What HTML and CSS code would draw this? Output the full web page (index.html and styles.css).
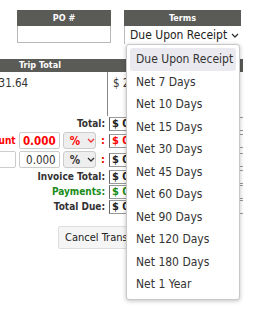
FILE: index.html
```html
<!DOCTYPE html>
<html lang="en">
<head>
    <meta charset="UTF-8">
    <meta name="viewport" content="width=device-width, initial-scale=1.0">
    <title>Trip Invoice</title>
    <link rel="stylesheet" href="styles.css">
</head>
<body>
    <div class="page">
        <div class="top-row">
            <div class="field po">
                <div class="field-head">PO #</div>
                <div class="field-box"></div>
            </div>
            <div class="field terms">
                <div class="field-head">Terms</div>
                <div class="select-box">
                    <span>Due Upon Receipt</span>
                    <svg class="chev" width="8" height="5" viewBox="0 0 8 5"><path d="M1 1l3 3 3-3" fill="none" stroke="#333" stroke-width="1.3"/></svg>
                </div>
                <ul class="menu">
                    <li class="active">Due Upon Receipt</li>
                    <li>Net 7 Days</li>
                    <li>Net 10 Days</li>
                    <li>Net 15 Days</li>
                    <li>Net 30 Days</li>
                    <li>Net 45 Days</li>
                    <li>Net 60 Days</li>
                    <li>Net 90 Days</li>
                    <li>Net 120 Days</li>
                    <li>Net 180 Days</li>
                    <li>Net 1 Year</li>
                </ul>
            </div>
        </div>

        <div class="trip">
            <div class="trip-head">
                <div class="col-a">Trip Total</div>
                <div class="col-b"></div>
            </div>
            <div class="trip-row">
                <div class="col-a">$31.64</div>
                <div class="col-b">$ 231.64</div>
            </div>
        </div>

        <div class="totals">
            <div class="t-row">
                <div class="t-label">Total:</div>
                <div class="t-value">$ 0.00</div>
            </div>
            <div class="t-row red">
                <div class="t-label">
                    <span>Discount</span>
                    <input class="num red-num" value="0.000">
                    <div class="pct red-pct">% <svg width="8" height="5" viewBox="0 0 8 5"><path d="M1 1l3 3 3-3" fill="none" stroke="#e33" stroke-width="1.3"/></svg></div>
                    <span class="colon">:</span>
                </div>
                <div class="t-value">$ 0.00</div>
            </div>
            <div class="t-row">
                <div class="t-label">
                    <input class="num wide" value="">
                    <input class="num" value="0.000">
                    <div class="pct">% <svg width="8" height="5" viewBox="0 0 8 5"><path d="M1 1l3 3 3-3" fill="none" stroke="#333" stroke-width="1.3"/></svg></div>
                    <span class="colon">:</span>
                </div>
                <div class="t-value">$ 0.00</div>
            </div>
            <div class="t-row">
                <div class="t-label">Invoice Total:</div>
                <div class="t-value">$ 0.00</div>
            </div>
            <div class="t-row green">
                <div class="t-label">Payments:</div>
                <div class="t-value">$ 0.00</div>
            </div>
            <div class="t-row">
                <div class="t-label">Total Due:</div>
                <div class="t-value">$ 0.00</div>
            </div>
        </div>

        <div class="actions">
            <button class="btn">Cancel Transaction</button>
        </div>
    </div>
</body>
</html>
```

FILE: styles.css
```css
html, body {
    height: 320px;
}

body {
    margin: 0;
    overflow: hidden;
    background: #fff;
    font-family: 'DejaVu Sans Condensed', 'Liberation Sans', sans-serif;
    color: #333;
}

.page {
    margin-left: -12px;
    width: 255px;
    padding-top: 10px;
}

.top-row {
    display: flex;
    padding-left: 29px;
    gap: 13px;
}

.field {
    position: relative;
}

.field.po {
    width: 94px;
}

.field.terms {
    width: 117px;
}

.field-head {
    background: #5a5a57;
    color: #fff;
    font-size: 9px;
    font-weight: bold;
    text-align: center;
    height: 16px;
    line-height: 16px;
}

.field-box {
    height: 16px;
    border: 1px solid #b8b8b8;
    border-top: none;
}

.select-box {
    display: flex;
    align-items: center;
    gap: 4px;
    height: 18px;
    padding-left: 5px;
    font-size: 12px;
    color: #222;
    border-left: 1px solid #bbb;
}

.menu {
    position: absolute;
    left: 2px;
    top: 34px;
    width: 106px;
    margin: 0;
    padding: 3px;
    list-style: none;
    background: #fff;
    border: 1px solid #c9c9c9;
    border-radius: 3px;
    box-shadow: 0 1px 4px rgba(0, 0, 0, 0.25);
    z-index: 5;
}

.menu li {
    height: 22.5px;
    line-height: 22.5px;
    padding-left: 6px;
    font-size: 12px;
    color: #333;
    border-radius: 3px;
}

.menu li.active {
    background: #e9e9ef;
}

.trip {
    margin-top: 15px;
}

.trip-head {
    display: flex;
    background: #5a5a57;
    color: #fff;
    font-size: 9px;
    font-weight: bold;
    height: 13px;
    line-height: 13px;
}

.trip-head .col-a {
    width: 108px;
    padding-left: 31px;
    box-sizing: border-box;
    text-align: left;
}

.trip-row {
    display: flex;
    height: 44px;
    font-size: 11.5px;
}

.trip-row .col-a {
    width: 120px;
    padding: 4px 0 0 4px;
    box-sizing: border-box;
    border-right: 1px solid #888;
}

.trip-row .col-b {
    padding: 4px 0 0 5px;
}

.totals {
    display: flex;
    flex-direction: column;
}

.t-row {
    display: flex;
    align-items: center;
    min-height: 15px;
}

.t-label {
    width: 117px;
    display: flex;
    align-items: center;
    justify-content: flex-end;
    gap: 3px;
    font-size: 10px;
    font-weight: bold;
    color: #333;
    padding-right: 4px;
    white-space: nowrap;
}

.t-value {
    flex: 1;
    height: 12px;
    line-height: 12px;
    padding-left: 2px;
    font-size: 11px;
    font-weight: bold;
    border: 1px solid #999;
    border-left-color: #666;
    border-right: none;
    color: #222;
}

.t-row.red .t-label,
.t-row.red .t-value {
    color: #f00;
}

.t-row.green .t-label,
.t-row.green .t-value {
    color: #1a8c1a;
}

.t-row:nth-child(2),
.t-row:nth-child(3) {
    min-height: 19px;
}

.num {
    width: 41px;
    height: 17px;
    box-sizing: border-box;
    border: 1px solid #ccc;
    border-radius: 2px;
    font-family: inherit;
    font-size: 11.5px;
    text-align: right;
    padding: 0 3px;
    color: #333;
}

.num.red-num {
    color: #f00;
    font-weight: bold;
}

.num.wide {
    width: 30px;
}

.pct {
    width: 41px;
    height: 17px;
    box-sizing: border-box;
    display: flex;
    align-items: center;
    gap: 7px;
    padding-left: 6px;
    background: #eee;
    border: 1px solid #ccc;
    border-radius: 3px;
    font-size: 11.5px;
    color: #333;
}

.pct.red-pct {
    color: #f00;
}

.colon {
    color: #f00;
    font-size: 11px;
    margin-left: 2px;
}

.actions {
    padding: 12px 0 0 70px;
}

.btn {
    height: 23px;
    padding: 0 6px;
    background: #f5f5f5;
    border: 1px solid #ddd;
    border-radius: 2px;
    font-family: inherit;
    font-size: 11px;
    color: #222;
    white-space: nowrap;
}
```
